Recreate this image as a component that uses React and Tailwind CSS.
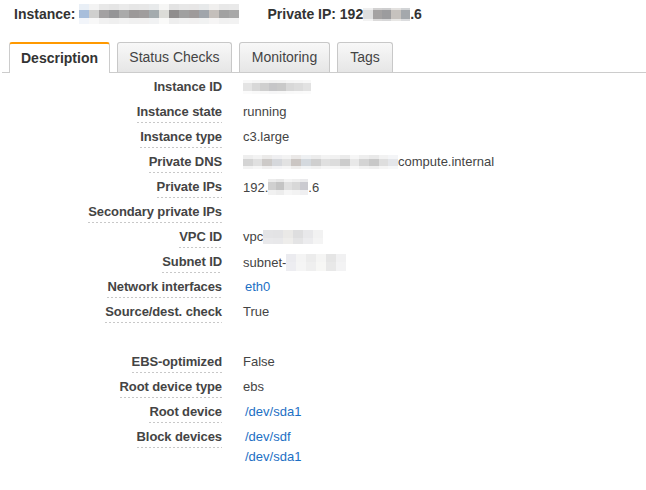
import React from 'react';

const lighten = (hex, t) => {
  const n = parseInt(hex.slice(1), 16);
  const mix = (c) => Math.round(c + (255 - c) * t);
  const r = mix((n >> 16) & 255);
  const g = mix((n >> 8) & 255);
  const b = mix(n & 255);
  return `rgb(${r},${g},${b})`;
};

// pixelated, blurred-out value (as in the screenshot)
const Blur = ({ colors, cell = 10, top = 3, mid = 8, bottom = 3, fade = 0.75, lead }) => (
  <span className="inline-flex">
    {colors.map((c, i) => (
      <span key={i} className="flex flex-col" style={{ width: cell }}>
        <span style={{ height: top, background: lighten(c, fade) }} />
        <span style={{ height: mid, background: i === 0 && lead ? lead : c }} />
        <span style={{ height: bottom, background: lighten(c, fade + 0.1) }} />
      </span>
    ))}
  </span>
);

const Link = ({ children }) => (
  <span className="ml-[2px] text-[#1c6fc4]">{children}</span>
);

const rows = [
  {
    label: 'Instance ID',
    plain: true,
    value: <Blur cell={8.5} top={3} mid={8} bottom={3} colors={['#e4e4e4', '#d8d8d8', '#cfcfcf', '#c6c6c8', '#c9c9c9', '#d8d8d8', '#dcdcdc', '#e2e2e2']} />,
  },
  { label: 'Instance state', value: 'running' },
  { label: 'Instance type', value: 'c3.large' },
  {
    label: 'Private DNS',
    value: (
      <>
        <Blur cell={9.7} top={4} mid={7} bottom={3} fade={0.6} colors={['#d4d4d4', '#e0e0e0', '#cdcac8', '#d6d8dc', '#e2e2e2', '#cbc6c3', '#d4d9de', '#cfcfcf', '#e0e0e0', '#dcdcdc', '#cccccc', '#e8e8e8', '#d4d4d4', '#c8c8c8', '#dedede', '#e4e6ea']} />
        <span>compute.internal</span>
      </>
    ),
  },
  {
    label: 'Private IPs',
    value: (
      <>
        <span>192.</span>
        <Blur cell={8} top={3} mid={8} bottom={5} fade={0.6} colors={['#d0d0d0', '#c4c4c4', '#e0e0e0', '#d8d8d8', '#cacad0']} />
        <span>.6</span>
      </>
    ),
  },
  { label: 'Secondary private IPs', value: '' },
  {
    label: 'VPC ID',
    value: (
      <>
        <span>vpc</span>
        <Blur cell={10} top={8} mid={0} bottom={6} fade={0.5} colors={['#c8c8cc', '#c6c6ca', '#d4d2ce', '#bcbcbe', '#d0d0d4', '#e4e4e4']} />
      </>
    ),
  },
  {
    label: 'Subnet ID',
    value: (
      <>
        <span>subnet-</span>
        <Blur cell={10} top={8} mid={0} bottom={9} fade={0.25} colors={['#e4e4ea', '#f0f0f0', '#e6e6e6', '#f2f2f0', '#dcdcdc', '#ececee']} />
      </>
    ),
  },
  { label: 'Network interfaces', value: <Link>eth0</Link> },
  { label: 'Source/dest. check', value: 'True' },
  null,
  { label: 'EBS-optimized', value: 'False' },
  { label: 'Root device type', value: 'ebs' },
  { label: 'Root device', value: <Link>/dev/sda1</Link> },
  {
    label: 'Block devices',
    value: (
      <div className="flex flex-col gap-[5px]">
        <Link>/dev/sdf</Link>
        <Link>/dev/sda1</Link>
      </div>
    ),
  },
];

const tabs = [
  { name: 'Description', w: 'w-[101px]' },
  { name: 'Status Checks', w: 'w-[115px]' },
  { name: 'Monitoring', w: 'w-[91px]' },
  { name: 'Tags', w: 'w-[56px]' },
];

export default function App() {
  return (
    <div className="w-[646px] h-[490px] bg-white text-[#444] font-['Liberation_Sans',Arial,sans-serif] overflow-hidden">
      {/* header */}
      <div className="h-[28px] flex items-center pl-[14px] text-[14px] font-bold text-[#333]">
        <span>Instance:</span>
        <span className="ml-[4px] flex items-center">
          <Blur
            cell={10}
            top={6}
            mid={8}
            bottom={6}
            fade={0.75}
            lead="#a8bedb"
            colors={['#a8bedb', '#cfcfce', '#a3a1a2', '#959597', '#aaaaaa', '#9c9999', '#a09d9d', '#a4abae', '#dcdcd8', '#8f8d8d', '#a0a0a0', '#9f9b9b', '#a0a5ab', '#c4bfbb', '#a2a2a2', '#a8a8a8']}
          />
        </span>
        <span className="ml-[28px]">Private IP: 192</span>
        <Blur cell={9.4} top={2} mid={9} bottom={2} fade={0.5} colors={['#dedede', '#a4a2a2', '#9c9c9e', '#c6c2be', '#a4a8ac']} />
        <span>.6</span>
      </div>

      {/* tabs */}
      <div className="mt-[14px] ml-[2px] flex items-end gap-[7px] pl-[7px] border-b border-[#cccccc] h-[31px]">
        {tabs.map((t, i) =>
          i === 0 ? (
            <div
              key={t.name}
              className={`${t.w} -mb-px h-[31px] flex items-center justify-center bg-white border-x border-t-2 border-[#cccccc] border-t-[#f90] rounded-t-[3px] text-[14px] font-bold text-[#333]`}
            >
              {t.name}
            </div>
          ) : (
            <div
              key={t.name}
              className={`${t.w} h-[30px] flex items-center justify-center bg-gradient-to-b from-[#f8f8f8] to-[#e6e6e6] border border-b-0 border-[#c8c8c8] rounded-t-[3px] text-[14px] text-[#444]`}
            >
              {t.name}
            </div>
          )
        )}
      </div>

      {/* details */}
      <div className="pt-px text-[13px]">
        {rows.map((r, i) =>
          r === null ? (
            <div key={i} className="h-[25px]" />
          ) : (
            <div key={r.label} className="flex min-h-[25px]">
              <div className="w-[222px] flex justify-end items-start pt-[5px]">
                <span
                  className={
                    r.plain
                      ? 'leading-[15px] font-bold tracking-[-0.1px] text-[#444]'
                      : 'leading-[15px] font-bold tracking-[-0.1px] text-[#444] pb-[4px] bg-[repeating-linear-gradient(to_right,#c8c8c8_0_2px,transparent_2px_4px)] bg-[length:100%_1px] bg-bottom bg-no-repeat'
                  }
                >
                  {r.label}
                </span>
              </div>
              <div className="ml-[21px] pt-[5px] leading-[15px]">
                <div className="flex items-center min-h-[15px]">{r.value}</div>
              </div>
            </div>
          )
        )}
      </div>
    </div>
  );
}
